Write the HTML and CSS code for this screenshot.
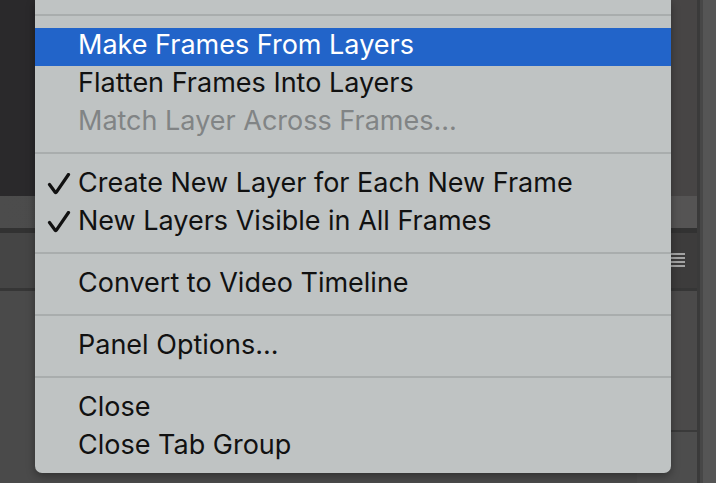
FILE: index.html
```html
<!DOCTYPE html>
<html>
<head>
<meta charset="utf-8">
<link rel="stylesheet" href="styles.css">
</head>
<body>
<div class="app">
  <div class="main">
    <div class="top">
      <div class="canvas"></div>
      <div class="side"></div>
    </div>
    <div class="tabbar">
      <div class="tab-left"></div>
      <div class="tab-right"></div>
    </div>
    <div class="band"></div>
    <div class="panelhead">
      <div class="ph-left"></div>
      <div class="ph-right">
        <span class="burger"><i></i><i></i><i></i><i></i></span>
      </div>
    </div>
    <div class="hline"></div>
    <div class="panelbody">
      <div class="pb-left"></div>
      <div class="pb-right">
        <div class="pb-upper"></div>
        <div class="pb-lower"></div>
      </div>
    </div>
  </div>
  <div class="divider"><i></i><i></i></div>
  <div class="rightcol"></div>

  <div class="menu">
    <div class="sep"></div>
    <div class="item active">Make Frames From Layers</div>
    <div class="item">Flatten Frames Into Layers</div>
    <div class="item disabled">Match Layer Across Frames...</div>
    <div class="sep"></div>
    <div class="item checked"><svg class="check" viewBox="0 0 24 22" width="24" height="22"><path d="M2.5 11.5 L8.2 19.2 Q8.8 20 9.4 19.1 L21.5 1.5" fill="none" stroke="#111" stroke-width="3.2" stroke-linecap="round" stroke-linejoin="round"/></svg>Create New Layer for Each New Frame</div>
    <div class="item checked"><svg class="check" viewBox="0 0 24 22" width="24" height="22"><path d="M2.5 11.5 L8.2 19.2 Q8.8 20 9.4 19.1 L21.5 1.5" fill="none" stroke="#111" stroke-width="3.2" stroke-linecap="round" stroke-linejoin="round"/></svg>New Layers Visible in All Frames</div>
    <div class="sep"></div>
    <div class="item">Convert to Video Timeline</div>
    <div class="sep"></div>
    <div class="item">Panel Options...</div>
    <div class="sep"></div>
    <div class="item">Close</div>
    <div class="item">Close Tab Group</div>
  </div>
</div>
</body>
</html>
```

FILE: styles.css
```css
html, body {
  margin: 0;
  padding: 0;
  background: #4a4a4a;
}
.app {
  position: relative;
  width: 716px;
  height: 483px;
  display: flex;
  overflow: hidden;
}
.main {
  flex: 1;
  display: flex;
  flex-direction: column;
}
.top {
  height: 196px;
  display: flex;
}
.canvas {
  flex: 1;
  background: #2a292b;
}
.side {
  width: 60px;
  background: #474545;
}
.tabbar {
  height: 32px;
  display: flex;
}
.tab-left {
  flex: 1;
  background: linear-gradient(to right, #4c4c4c, #474747);
}
.tab-right {
  width: 60px;
  background: #555454;
}
.band {
  height: 5px;
  background: #323232;
}
.panelhead {
  height: 55px;
  display: flex;
}
.ph-left {
  flex: 1;
  background: #454545;
}
.ph-right {
  width: 60px;
  background: #3d3c3c;
  display: flex;
  align-items: flex-start;
  padding-top: 20px;
  box-sizing: border-box;
}
.burger {
  display: flex;
  flex-direction: column;
  gap: 2px;
  margin-left: 24px;
}
.burger i {
  display: block;
  width: 24px;
  height: 2px;
  background: #a3a3a3;
}
.hline {
  height: 3px;
  background: #363636;
}
.panelbody {
  flex: 1;
  display: flex;
}
.pb-left {
  flex: 1;
  background: #4a4a4a;
}
.pb-right {
  width: 60px;
  display: flex;
  flex-direction: column;
}
.pb-upper {
  height: 139px;
  background: #4b4a4a;
  border-bottom: 2px solid #3a3a3a;
}
.pb-lower {
  flex: 1;
  background: #4d4d4d;
}
.divider {
  width: 6px;
  display: flex;
  background: #4a4a4a;
}
.divider i {
  display: block;
  width: 3px;
  background: #3a3a3a;
}
.divider i + i {
  background: #474747;
}
.rightcol {
  width: 13px;
  background: #555555;
}

/* menu overlay */
.menu {
  position: absolute;
  left: 35px;
  top: 0;
  width: 636px;
  padding: 4px 0 7px;
  background: #bfc3c3;
  border-radius: 0 0 7px 7px;
  box-shadow: 0 3px 8px rgba(0, 0, 0, 0.35);
  font-family: "Inter", "Noto Sans", sans-serif;
  font-size: 27px;
  color: #111111;
}
.sep {
  height: 2px;
  margin: 10px 0 12px;
  background: #a9adad;
}
.item {
  position: relative;
  height: 38px;
  line-height: 34px;
  padding-left: 43px;
  white-space: nowrap;
}
.item.active {
  background: #2264c9;
  color: #ffffff;
}
.item.disabled {
  color: #818485;
}
.check {
  position: absolute;
  left: 12px;
  top: 7px;
}
```
